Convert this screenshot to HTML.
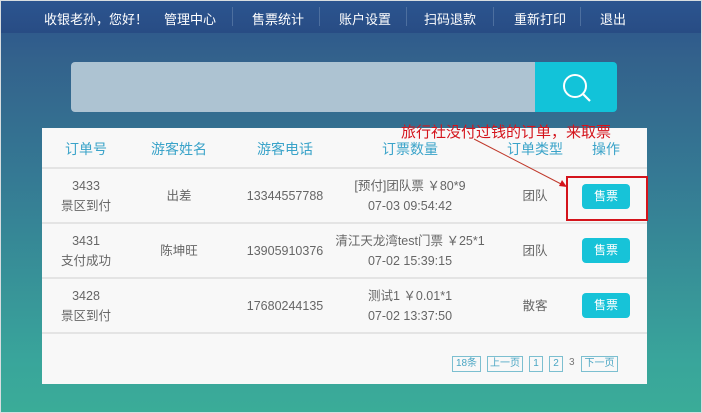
<!DOCTYPE html>
<html><head><meta charset="utf-8"><style>
*{margin:0;padding:0;box-sizing:border-box}
body{width:702px;height:413px;overflow:hidden;font-family:"Liberation Sans","Noto Sans CJK SC",sans-serif;position:relative;background:linear-gradient(180deg,#2f5a8c 30px,#33628c 60px,#357a94 180px,#39a59b 360px,#3aac98 413px)}
.frame{position:absolute;left:0;top:0;width:702px;height:413px;border:1px solid #d8dde0;pointer-events:none}
.nav{position:absolute;left:0;top:0;width:702px;height:33px;background:linear-gradient(#2c5590,#284c84);color:#fff;font-size:13px}
.nav span{position:absolute;top:9px;white-space:nowrap}
.sep{position:absolute;top:7px;width:1px;height:19px;background:#4d6f9f}
.search{position:absolute;left:71px;top:62px;width:465px;height:50px;background:#adc3d2;border-radius:4px 0 0 4px}
.btn{position:absolute;left:535px;top:62px;width:82px;height:50px;background:#12c3d9;border-radius:0 4px 4px 0}
.panel{position:absolute;left:42px;top:128px;width:605px;height:256px;background:#f8f8f8}
.c{position:absolute;text-align:center;transform:translateX(-50%);white-space:nowrap;font-size:12.5px;color:#666;line-height:20px}
.h{color:#3aa3c9;font-size:14px;top:11px}
.line{position:absolute;height:2px;background:#e4e4e4}
.sell{position:absolute;left:540px;width:48px;height:25px;background:#17c3d8;border-radius:4px;color:#fff;font-size:12px;text-align:center;line-height:25px}
.pg{position:absolute;top:228px;height:16px;border:1px solid #7cbfd0;color:#4aa6c4;font-size:10px;line-height:14px;text-align:center}
</style></head><body>
<div class="nav">
<span style="left:44px">收银老孙，您好！</span>
<span style="left:164px">管理中心</span><div class="sep" style="left:232px"></div>
<span style="left:252px">售票统计</span><div class="sep" style="left:319px"></div>
<span style="left:339px">账户设置</span><div class="sep" style="left:406px"></div>
<span style="left:424px">扫码退款</span><div class="sep" style="left:493px"></div>
<span style="left:514px">重新打印</span><div class="sep" style="left:580px"></div>
<span style="left:600px">退出</span>
</div>
<div class="search"></div>
<div class="btn"><svg width="82" height="50"><circle cx="40" cy="24" r="11" fill="none" stroke="#fff" stroke-width="2"/><line x1="48" y1="32" x2="55" y2="39" stroke="#fff" stroke-width="2.2"/></svg></div>
<div class="panel">
<div class="c h" style="left:44px">订单号</div>
<div class="c h" style="left:137px">游客姓名</div>
<div class="c h" style="left:243px">游客电话</div>
<div class="c h" style="left:368px">订票数量</div>
<div class="c h" style="left:493px">订单类型</div>
<div class="c h" style="left:564px">操作</div>
<div class="line" style="left:0;top:39px;width:605px"></div>
<div class="c" style="left:44px;top:48px">3433<br>景区到付</div>
<div class="c" style="left:137px;top:58px">出差</div>
<div class="c" style="left:243px;top:58px">13344557788</div>
<div class="c" style="left:368px;top:48px">[预付]团队票 ￥80*9<br>07-03 09:54:42</div>
<div class="c" style="left:493px;top:58px">团队</div>
<div class="sell" style="top:56px">售票</div>
<div class="line" style="left:0;top:94px;width:605px"></div>
<div class="c" style="left:44px;top:103px">3431<br>支付成功</div>
<div class="c" style="left:137px;top:113px">陈坤旺</div>
<div class="c" style="left:243px;top:113px">13905910376</div>
<div class="c" style="left:368px;top:103px">清江天龙湾test门票 ￥25*1<br>07-02 15:39:15</div>
<div class="c" style="left:493px;top:113px">团队</div>
<div class="sell" style="top:110px">售票</div>
<div class="line" style="left:0;top:149px;width:605px"></div>
<div class="c" style="left:44px;top:158px">3428<br>景区到付</div>
<div class="c" style="left:243px;top:168px">17680244135</div>
<div class="c" style="left:368px;top:158px">测试1 ￥0.01*1<br>07-02 13:37:50</div>
<div class="c" style="left:493px;top:168px">散客</div>
<div class="sell" style="top:165px">售票</div>
<div class="line" style="left:0;top:204px;width:605px"></div>
<div class="pg" style="left:410px;width:29px">18条</div>
<div class="pg" style="left:445px;width:36px">上一页</div>
<div class="pg" style="left:487px;width:14px">1</div>
<div class="pg" style="left:507px;width:14px">2</div>
<div style="position:absolute;left:527px;top:229px;font-size:10px;color:#777">3</div>
<div class="pg" style="left:539px;width:37px">下一页</div>
</div>
<div style="position:absolute;left:566px;top:176px;width:82px;height:45px;border:2px solid #d4141c"></div>
<svg style="position:absolute;left:0;top:0" width="702" height="413"><line x1="474" y1="139" x2="563" y2="185" stroke="#c0392b" stroke-width="1"/><polygon points="567,187 559,186 562,180" fill="#d4141c"/></svg>
<div style="position:absolute;left:401px;top:121px;color:#d4141c;font-size:15px;white-space:nowrap">旅行社没付过钱的订单，来取票</div>
<div class="frame"></div>
</body></html>
